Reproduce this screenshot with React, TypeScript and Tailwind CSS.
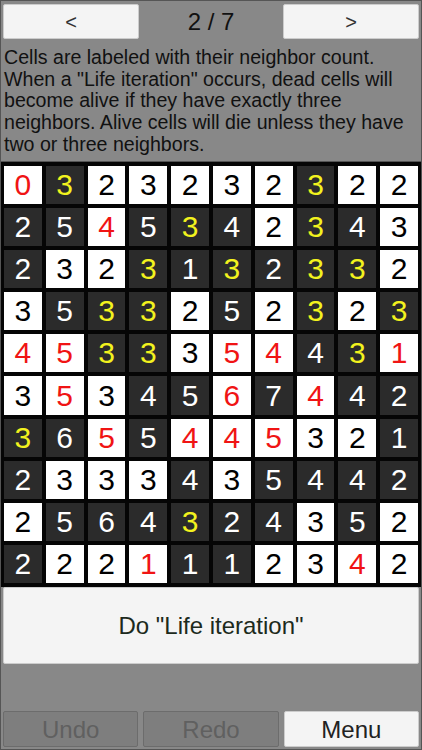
import React from "react";

// cell: [count, alive]
const board: [number, number][][] = [
  [[0, 1], [3, 0], [2, 1], [3, 1], [2, 1], [3, 1], [2, 1], [3, 0], [2, 1], [2, 1]],
  [[2, 0], [5, 0], [4, 1], [5, 0], [3, 0], [4, 0], [2, 1], [3, 0], [4, 0], [3, 1]],
  [[2, 0], [3, 1], [2, 1], [3, 0], [1, 0], [3, 0], [2, 0], [3, 0], [3, 0], [2, 1]],
  [[3, 1], [5, 0], [3, 0], [3, 0], [2, 1], [5, 0], [2, 1], [3, 0], [2, 1], [3, 0]],
  [[4, 1], [5, 1], [3, 0], [3, 0], [3, 1], [5, 1], [4, 1], [4, 0], [3, 0], [1, 1]],
  [[3, 1], [5, 1], [3, 1], [4, 0], [5, 0], [6, 1], [7, 0], [4, 1], [4, 0], [2, 0]],
  [[3, 0], [6, 0], [5, 1], [5, 0], [4, 1], [4, 1], [5, 1], [3, 1], [2, 1], [1, 0]],
  [[2, 0], [3, 1], [3, 1], [3, 1], [4, 0], [3, 1], [5, 0], [4, 0], [4, 0], [2, 0]],
  [[2, 1], [5, 0], [6, 0], [4, 0], [3, 0], [2, 0], [4, 0], [3, 1], [5, 0], [2, 1]],
  [[2, 0], [2, 1], [2, 1], [1, 1], [1, 0], [1, 0], [2, 1], [3, 1], [4, 1], [2, 1]],
];

function Cell({ n, alive }: { n: number; alive: boolean }) {
  let cls = "bg-[#2b2b2b] text-white";
  if (alive) {
    cls = n === 2 || n === 3 ? "bg-white text-black" : "bg-white text-[#f01414]";
  } else if (n === 3) {
    cls = "bg-[#2b2b2b] text-[#f2f21e]";
  }
  return (
    <div className={`m-[2px] flex items-center justify-center text-[30px] leading-none ${cls}`}>
      {n}
    </div>
  );
}

export default function App() {
  return (
    <div className="flex h-[750px] w-[422px] flex-col overflow-hidden border border-[#555] bg-[#888888] font-['Liberation_Sans',Arial,sans-serif]">
      <div className="h-[161px] border-b border-[#555]">
        <div className="flex h-[38px] items-end px-[2px]">
          <button className="h-[35px] w-[136px] rounded-[2px] border border-[#ccc] bg-[#f4f4f4] text-[20px] text-[#333]">
            &lt;
          </button>
          <div className="flex h-[35px] flex-1 items-center justify-center text-[24px] text-[#111]">
            2 / 7
          </div>
          <button className="h-[35px] w-[136px] rounded-[2px] border border-[#ccc] bg-[#f4f4f4] text-[20px] text-[#333]">
            &gt;
          </button>
        </div>
        <p className="mt-[8px] pl-[3px] pr-[2px] text-[19.6px] leading-[21.7px] text-[#111]">
          Cells are labeled with their neighbor count. When a "Life iteration" occurs, dead cells will
          become alive if they have exactly three neighbors. Alive cells will die unless they have two
          or three neighbors.
        </p>
      </div>

      <div className="grid h-[425px] grid-cols-10 grid-rows-10 bg-[#050505] px-[1px] py-[2px]">
        {board.map((row, r) =>
          row.map(([n, a], c) => <Cell key={`${r}-${c}`} n={n} alive={a === 1} />)
        )}
      </div>

      <div className="flex flex-1 flex-col px-[2px]">
        <button className="h-[77px] w-full rounded-[2px] border border-[#ccc] bg-[#f4f4f4] text-[24px] text-[#1c2a1c]">
          Do "Life iteration"
        </button>
        <div className="flex-1" />
        <div className="mb-[2px] flex gap-[5px]">
          <button className="h-[36px] flex-1 rounded-[2px] border border-[#6c6c6c] bg-[#7e7e7e] text-[24px] text-[#606060]">
            Undo
          </button>
          <button className="h-[36px] flex-1 rounded-[2px] border border-[#6c6c6c] bg-[#7e7e7e] text-[24px] text-[#606060]">
            Redo
          </button>
          <button className="h-[36px] flex-1 rounded-[2px] border border-[#ccc] bg-[#f4f4f4] text-[24px] text-[#222]">
            Menu
          </button>
        </div>
      </div>
    </div>
  );
}
